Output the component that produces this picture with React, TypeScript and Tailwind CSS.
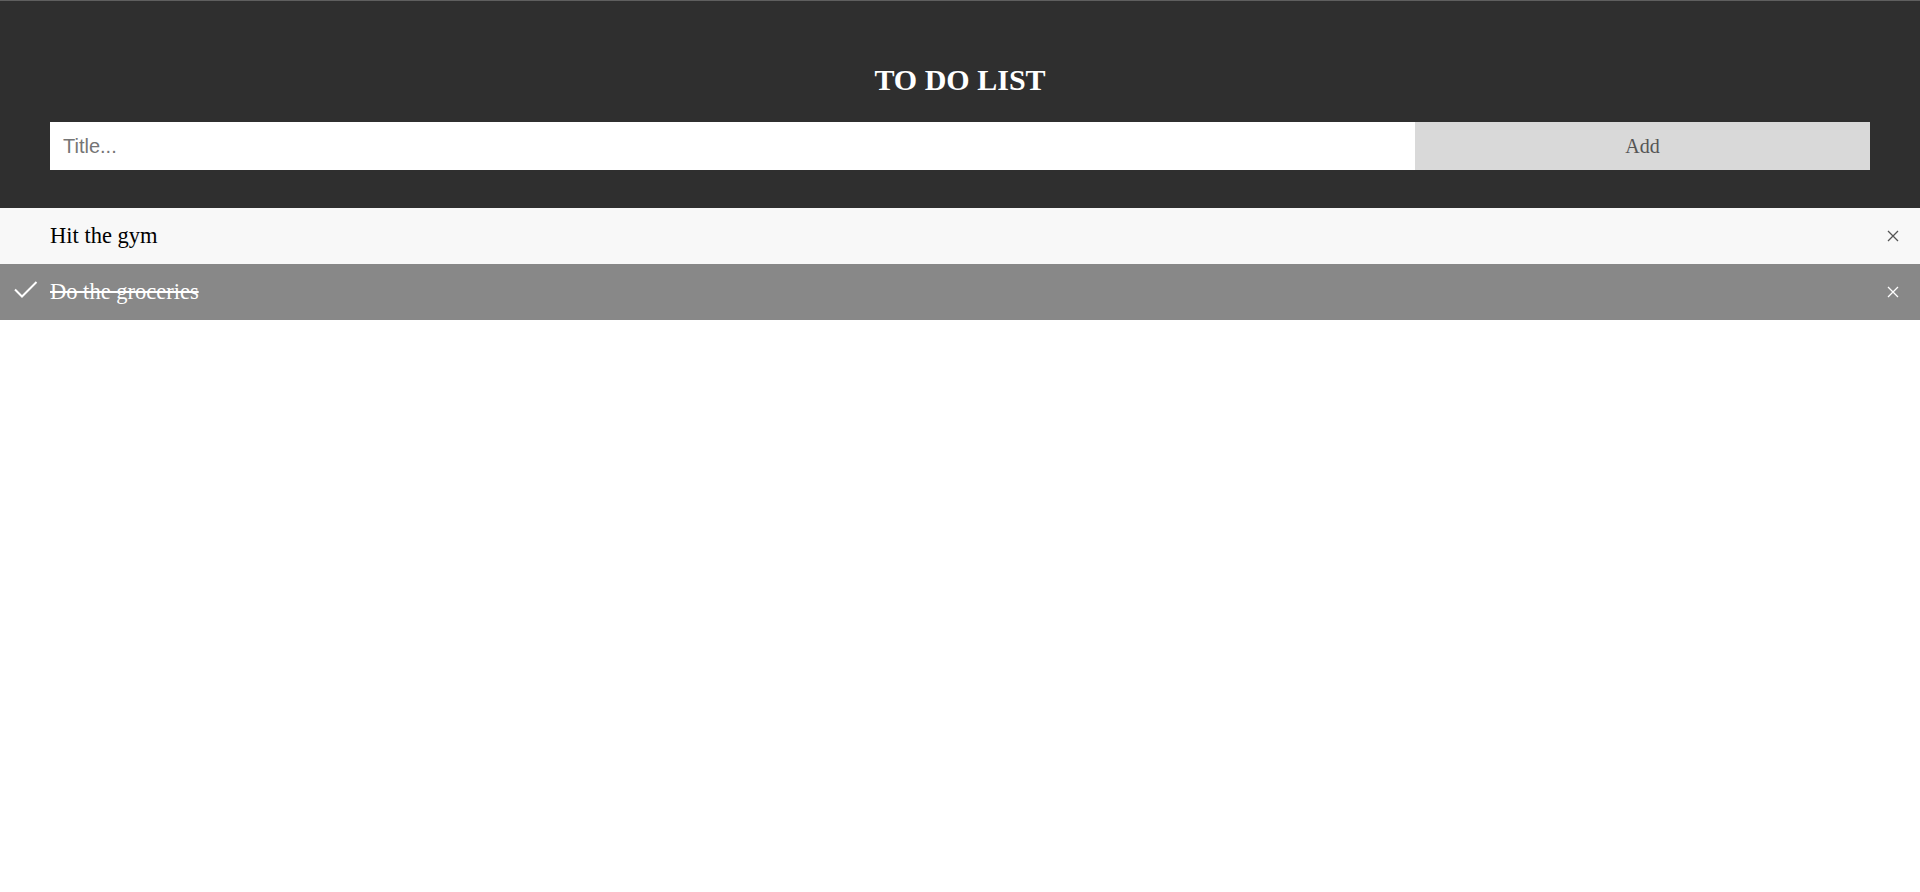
import React from "react";

function Cross({ color }: { color: string }) {
  return (
    <svg width="12" height="12" viewBox="0 0 12 12" className="shrink-0">
      <path d="M1 1 L11 11 M11 1 L1 11" stroke={color} strokeWidth="1.3" fill="none" />
    </svg>
  );
}

export default function App() {
  return (
    <div className="min-h-[892px] w-full bg-white" style={{ fontFamily: '"Liberation Serif", "Times New Roman", serif' }}>
      <div className="border-t border-[#5f5f5f] bg-[#2f2f2f] px-[50px] pt-[62px] pb-[38px]">
        <h1 className="text-center text-[30px] font-bold leading-[34px] text-white">TO DO LIST</h1>
        <div className="mt-[25px] flex h-[48px]">
          <input
            type="text"
            placeholder="Title..."
            className="h-full w-3/4 bg-white px-[13px] text-[20px] text-black placeholder:text-[#757575] outline-none"
            style={{ fontFamily: '"Liberation Sans", Arial, sans-serif' }}
          />
          <button className="h-full w-1/4 bg-[#d9d9d9] text-[20px] text-[#555]">Add</button>
        </div>
      </div>
      <ul>
        <li className="flex h-[56px] items-center bg-[#f8f8f8] pl-[50px] pr-[21px]">
          <span className="flex-1 pb-[1px] text-[22.5px] text-black">Hit the gym</span>
          <Cross color="#555" />
        </li>
        <li className="relative flex h-[56px] items-center bg-[#888] pl-[50px] pr-[21px]">
          <svg width="24" height="17" viewBox="0 0 24 17" className="absolute left-[14px] top-[17px]">
            <path d="M1 8.5 L8 15.5 L22.5 1" stroke="#fff" strokeWidth="2" fill="none" />
          </svg>
          <span className="flex-1 pb-[1px] text-[22.5px] text-white line-through">Do the groceries</span>
          <Cross color="#fff" />
        </li>
      </ul>
    </div>
  );
}
